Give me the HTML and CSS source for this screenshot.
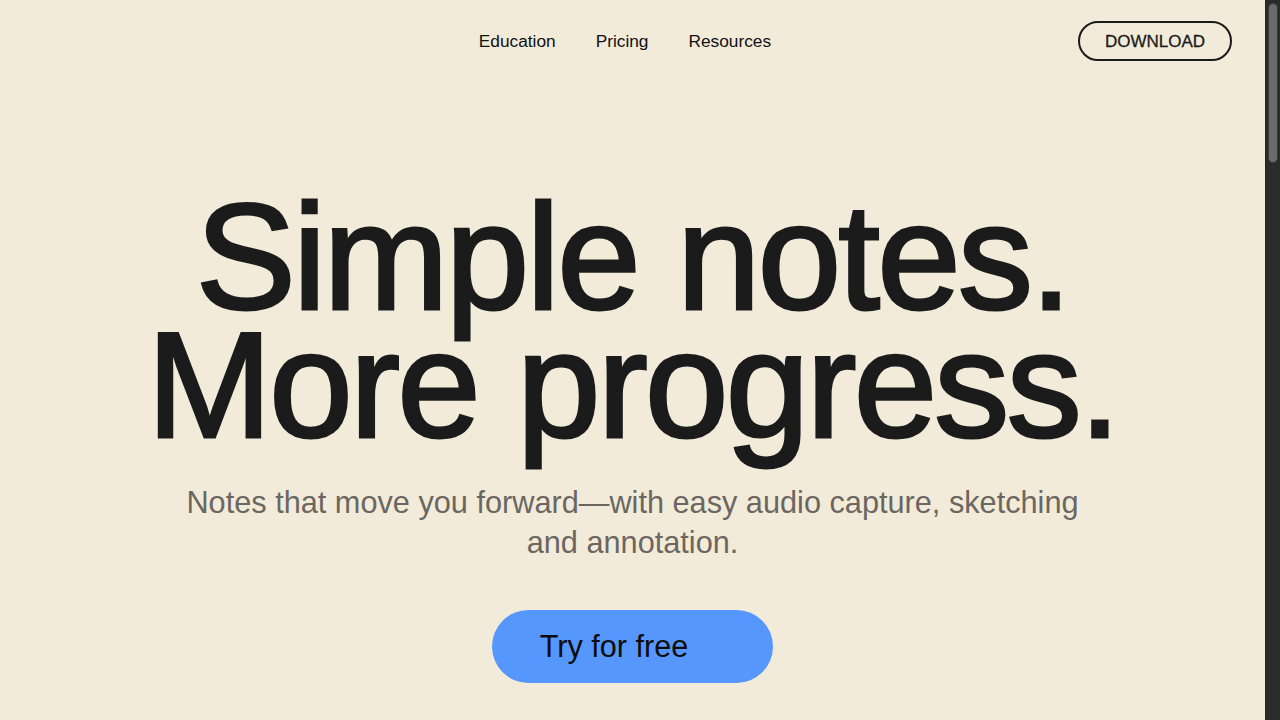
FILE: index.html
```html
<!DOCTYPE html>
<html lang="en">
<head>
<meta charset="utf-8">
<title>Simple notes. More progress.</title>
<link rel="stylesheet" href="styles.css">
</head>
<body>
<div class="page">
  <header class="site-header">
    <a class="brand" href="#" aria-label="Home"></a>
    <nav class="main-nav">
      <a href="#">Education</a>
      <a href="#">Pricing</a>
      <a href="#">Resources</a>
    </nav>
    <a class="btn-download" href="#">DOWNLOAD</a>
  </header>
  <main>
    <section class="hero">
      <h1 class="hero-title">Simple notes.<br>More progress.</h1>
      <p class="hero-sub">Notes that move you forward—with easy audio capture, sketching and annotation.</p>
      <a class="btn-try" href="#">Try for free</a>
    </section>
  </main>
</div>
<div class="scrollbar" aria-hidden="true"><div class="scrollbar-thumb"></div></div>
</body>
</html>
```
FILE: styles.css
```css
html {
  background: #f3ebda;
}
body {
  margin: 0 15px 0 0;
  background: #f3ebda;
  color: #1b1b1b;
  font-family: "Liberation Sans", Arial, sans-serif;
}
a {
  color: inherit;
  text-decoration: none;
}
.page {
  min-height: 100vh;
}
.site-header {
  display: flex;
  align-items: center;
  justify-content: space-between;
  padding: 21px 33px 0 32px;
}
.brand {
  display: block;
  width: 140px;
  height: 40px;
}
.main-nav {
  display: flex;
  gap: 40px;
  font-size: 17.3px;
  color: #111;
}
.btn-download {
  display: flex;
  align-items: center;
  height: 35px;
  padding: 1px 25px 0;
  box-sizing: content-box;
  border: 2px solid #1b1b1b;
  border-radius: 999px;
  font-size: 17px;
  line-height: 35px;
  color: #1b1b1b;
  -webkit-text-stroke: 0.3px #1b1b1b;
}
.hero {
  display: flex;
  flex-direction: column;
  align-items: center;
  text-align: center;
  padding-top: 132px;
}
.hero-title {
  margin: 0;
  font-size: 150px;
  line-height: 128px;
  font-weight: 400;
  letter-spacing: -0.018em;
  color: #1b1b1b;
  -webkit-text-stroke: 3px #1b1b1b;
}
.hero-sub {
  margin: 34px 0 0;
  max-width: 920px;
  font-size: 30.7px;
  line-height: 40px;
  color: #6b6760;
}
.btn-try {
  margin-top: 47px;
  display: flex;
  align-items: center;
  height: 73px;
  padding: 0 85px 0 48px;
  border-radius: 999px;
  background: #5597fc;
  color: #0d0d0d;
  font-size: 30.6px;
}
.scrollbar {
  position: fixed;
  top: 0;
  right: 0;
  bottom: 0;
  width: 15px;
  background: #2b2b2b;
  border-left: 1px solid #242424;
  box-sizing: border-box;
  padding: 3px 2px 0 2px;
}
.scrollbar-thumb {
  height: 160px;
  border-radius: 5px;
  background: #6b6b6b;
  border: 1px solid #3a3a3a;
  box-sizing: border-box;
}
```
